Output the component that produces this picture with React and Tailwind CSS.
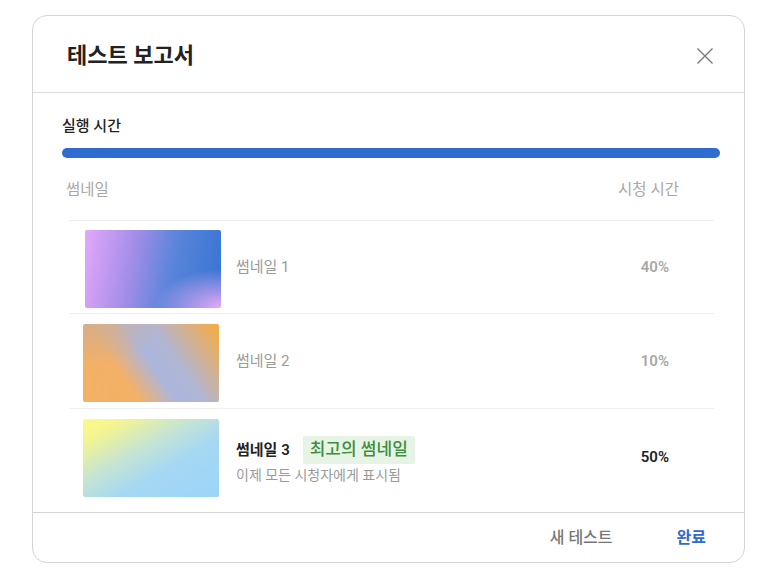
import React from "react";

export default function App() {
  return (
    <div className="w-[773px] h-[577px] bg-white font-['Roboto','Noto_Sans_CJK_KR',sans-serif]">
      <div className="pt-[15px] pl-[32px]">
        <div className="w-[713px] h-[548px] border border-[#d4d4d4] rounded-[15px] flex flex-col overflow-hidden bg-white">
          {/* header */}
          <div className="h-[77px] shrink-0 flex items-center justify-between pl-[34px] pr-[30px] border-b border-[#dcdcdc]">
            <div className="text-[22px] font-semibold text-[#222] leading-none mt-[4px]">테스트 보고서</div>
            <svg width="18" height="18" viewBox="0 0 18 18" className="mt-[4px]">
              <path d="M1.5 1.5 L16.5 16.5 M16.5 1.5 L1.5 16.5" stroke="#7a7a7a" strokeWidth="1.4" fill="none" />
            </svg>
          </div>
          {/* body */}
          <div className="flex-1 pl-[29px] pr-[24px] pt-[23px] overflow-hidden">
            <div className="text-[15px] leading-[20px] font-medium text-[#222]">실행 시간</div>
            <div className="mt-[12px] h-[10px] rounded-full bg-[#2f6bd1]"></div>
            <div className="mt-[22px] h-[40px] flex justify-between pl-[4px] pr-[41px] text-[15.5px] leading-[20px] text-[#a8a8a8]">
              <span>썸네일</span>
              <span>시청 시간</span>
            </div>
            <div className="ml-[7px] mr-[6px]">
              <div className="h-[93px] border-t border-[#efefef] flex items-center">
                <div className="w-[167px] pl-[16px] shrink-0 mt-[3px]">
                  <div className="w-[136px] h-[78px] rounded-[2px] bg-[radial-gradient(ellipse_at_100%_100%,#e9a9f7_0%,rgba(233,169,247,0)_35%),linear-gradient(100deg,#e3a8fa_0%,#a28de8_35%,#5a85da_62%,#3574d2_100%)]"></div>
                </div>
                <div className="flex-1 text-[15px] text-[#9a9a9a]">썸네일 1</div>
                <div className="pr-[45px] text-[15px] font-semibold text-[#a8a8a8]">40%</div>
              </div>
              <div className="h-[95px] border-t border-[#efefef] flex items-center">
                <div className="w-[167px] pl-[14px] shrink-0 mt-[3px]">
                  <div className="w-[136px] h-[78px] rounded-[2px] bg-[radial-gradient(ellipse_at_0%_0%,#d6ae8a_0%,rgba(214,174,138,0)_40%),linear-gradient(55deg,#f3b164_0%,#f3b066_30%,#acb6dc_50%,#b0b6d4_64%,#f0ad50_95%)]"></div>
                </div>
                <div className="flex-1 text-[15px] text-[#9a9a9a]">썸네일 2</div>
                <div className="pr-[45px] text-[15px] font-semibold text-[#a8a8a8]">10%</div>
              </div>
              <div className="h-[95px] border-t border-[#efefef] flex items-center">
                <div className="w-[167px] pl-[14px] shrink-0 mt-[3px]">
                  <div className="w-[136px] h-[78px] rounded-[2px] bg-[linear-gradient(150deg,#fdf988_0%,#f4f490_15%,#c6e4d2_40%,#a6d8f2_62%,#9bd4fa_100%)]"></div>
                </div>
                <div className="flex-1 mt-[10px]">
                  <div className="flex items-center">
                    <span className="text-[15px] font-semibold text-[#222]">썸네일 3</span>
                    <span className="ml-[13px] px-[7px] h-[28px] flex items-center rounded-[2px] bg-[#e7f4e5] text-[17px] font-medium text-[#3e8e3c]">최고의 썸네일</span>
                  </div>
                  <div className="mt-[1px] text-[14px] text-[#9a9a9a]">이제 모든 시청자에게 표시됨</div>
                </div>
                <div className="pr-[45px] text-[15px] font-semibold text-[#222] mt-[2px]">50%</div>
              </div>
            </div>
          </div>
          {/* footer */}
          <div className="h-[50px] shrink-0 border-t border-[#d4d4d4] flex items-center justify-end pr-[38px] gap-[64px] text-[16px] font-medium">
            <span className="text-[#777]">새 테스트</span>
            <span className="text-[#2f6bd1] font-bold">완료</span>
          </div>
        </div>
      </div>
    </div>
  );
}
